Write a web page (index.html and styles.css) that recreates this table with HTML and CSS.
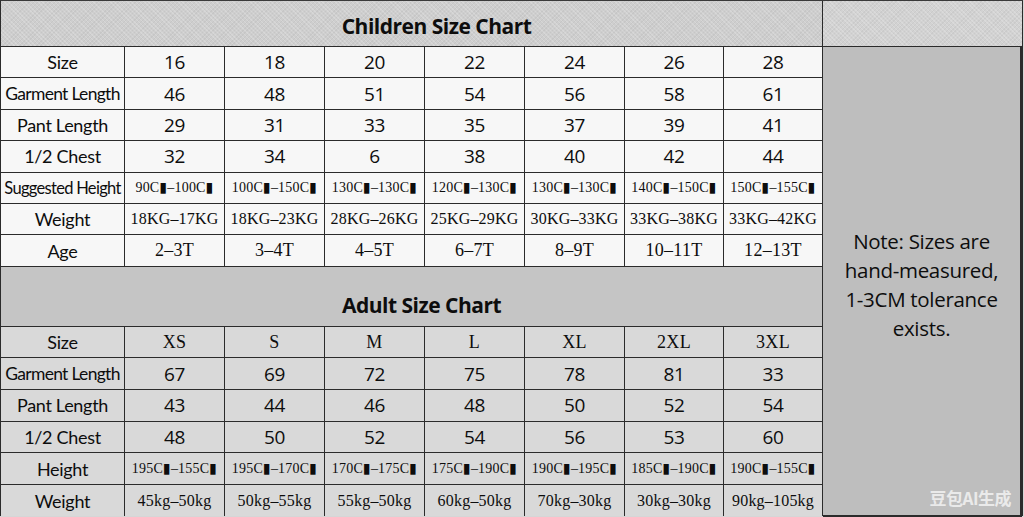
FILE: index.html
```html
<!DOCTYPE html>
<html>
<head>
<meta charset="utf-8">
<link rel="stylesheet" href="styles.css">
</head>
<body>
<div class="chart">
  <div class="title kids span8">Children Size Chart</div>
  <div class="title corner"></div>
  <div class="note">
    <p>Note: Sizes are<br>hand-measured,<br>1-3CM tolerance<br>exists.</p>
    <span class="mark">豆包AI生成</span>
  </div>

  <div class="c lab">Size</div>
  <div class="c num">16</div><div class="c num">18</div><div class="c num">20</div><div class="c num">22</div><div class="c num">24</div><div class="c num">26</div><div class="c num">28</div>

  <div class="c lab long">Garment Length</div>
  <div class="c num">46</div><div class="c num">48</div><div class="c num">51</div><div class="c num">54</div><div class="c num">56</div><div class="c num">58</div><div class="c num">61</div>

  <div class="c lab">Pant Length</div>
  <div class="c num">29</div><div class="c num">31</div><div class="c num">33</div><div class="c num">35</div><div class="c num">37</div><div class="c num">39</div><div class="c num">41</div>

  <div class="c lab">1/2 Chest</div>
  <div class="c num">32</div><div class="c num">34</div><div class="c num">6</div><div class="c num">38</div><div class="c num">40</div><div class="c num">42</div><div class="c num">44</div>

  <div class="c lab tight">Suggested Height</div>
  <div class="c sm">90C▮–100C▮</div><div class="c sm">100C▮–150C▮</div><div class="c sm">130C▮–130C▮</div><div class="c sm">120C▮–130C▮</div><div class="c sm">130C▮–130C▮</div><div class="c sm">140C▮–150C▮</div><div class="c sm">150C▮–155C▮</div>

  <div class="c lab">Weight</div>
  <div class="c ser">18KG–17KG</div><div class="c ser">18KG–23KG</div><div class="c ser">28KG–26KG</div><div class="c ser">25KG–29KG</div><div class="c ser">30KG–33KG</div><div class="c ser">33KG–38KG</div><div class="c ser">33KG–42KG</div>

  <div class="c lab">Age</div>
  <div class="c ser big">2–3T</div><div class="c ser big">3–4T</div><div class="c ser big">4–5T</div><div class="c ser big">6–7T</div><div class="c ser big">8–9T</div><div class="c ser big">10–11T</div><div class="c ser big">12–13T</div>

  <div class="title adult span8">Adult Size Chart</div>

  <div class="a lab">Size</div>
  <div class="a ser big">XS</div><div class="a ser big">S</div><div class="a ser big">M</div><div class="a ser big">L</div><div class="a ser big">XL</div><div class="a ser big">2XL</div><div class="a ser big">3XL</div>

  <div class="a lab long">Garment Length</div>
  <div class="a num">67</div><div class="a num">69</div><div class="a num">72</div><div class="a num">75</div><div class="a num">78</div><div class="a num">81</div><div class="a num">33</div>

  <div class="a lab">Pant Length</div>
  <div class="a num">43</div><div class="a num">44</div><div class="a num">46</div><div class="a num">48</div><div class="a num">50</div><div class="a num">52</div><div class="a num">54</div>

  <div class="a lab">1/2 Chest</div>
  <div class="a num">48</div><div class="a num">50</div><div class="a num">52</div><div class="a num">54</div><div class="a num">56</div><div class="a num">53</div><div class="a num">60</div>

  <div class="a lab">Height</div>
  <div class="a sm">195C▮–155C▮</div><div class="a sm">195C▮–170C▮</div><div class="a sm">170C▮–175C▮</div><div class="a sm">175C▮–190C▮</div><div class="a sm">190C▮–195C▮</div><div class="a sm">185C▮–190C▮</div><div class="a sm">190C▮–155C▮</div>

  <div class="a lab">Weight</div>
  <div class="a ser">45kg–50kg</div><div class="a ser">50kg–55kg</div><div class="a ser">55kg–50kg</div><div class="a ser">60kg–50kg</div><div class="a ser">70kg–30kg</div><div class="a ser">30kg–30kg</div><div class="a ser">90kg–105kg</div>
</div>
</body>
</html>
```

FILE: styles.css
```css
html, body {
  margin: 0;
  padding: 0;
  background: #d6d6d6;
  width: 1024px;
  height: 517px;
  overflow: hidden;
}

.chart {
  display: grid;
  grid-template-columns: 123px 99px 99px 99px 99px 99px 98px 98px 199px;
  grid-template-rows: 45px repeat(7, 30.4px) 59px repeat(6, 30.7px);
  gap: 1px;
  background: #2b2b2b;
  border-top: 1px solid #3a3a3a;
  border-left: 1px solid #2b2b2b;
  width: 1023px;
  box-sizing: border-box;
  font-family: "Open Sans", "Noto Sans", sans-serif;
  color: #0d0d0d;
}

.span8 {
  grid-column: 1 / 9;
}

.title {
  background-color: #cecece;
  background-image:
    repeating-linear-gradient(45deg, rgba(255,255,255,0.18) 0 1px, transparent 1px 3px),
    repeating-linear-gradient(-45deg, rgba(0,0,0,0.04) 0 1px, transparent 1px 3px);
  display: flex;
  align-items: center;
  justify-content: center;
  font-weight: 700;
  font-size: 21px;
  letter-spacing: -0.5px;
  padding-top: 4px;
}

.title.kids {
  padding-left: 50px;
}

.corner {
  grid-column: 9;
  grid-row: 1;
  background-color: #d2d2d2;
}

.title.adult {
  background: #c5c5c5;
  padding-top: 18px;
  padding-left: 20px;
}

.note {
  grid-column: 9;
  grid-row: 2 / 16;
  background: #bebebe;
  border-right: 2px solid #2b2b2b;
  border-bottom: 2px solid #2b2b2b;
  margin-bottom: -1px;
  display: flex;
  align-items: center;
  justify-content: center;
  position: relative;
}

.note p {
  margin: 8px 0 0 0;
  text-align: center;
  font-size: 20.5px;
  font-weight: 500;
  line-height: 29px;
  letter-spacing: -0.3px;
  color: #0d0d0d;
}

.mark {
  position: absolute;
  right: 9px;
  bottom: 5px;
  font-family: "Noto Sans CJK SC", sans-serif;
  font-weight: 700;
  font-size: 17px;
  letter-spacing: -0.5px;
  color: rgba(255,255,255,0.7);
}

.c, .a {
  display: flex;
  align-items: center;
  justify-content: center;
  white-space: nowrap;
  overflow: hidden;
}

.c {
  background: #f7f7f7;
}

.a {
  background: #d9d9d9;
}

.lab {
  font-family: Lato, "Open Sans", sans-serif;
  font-size: 18px;
  letter-spacing: -0.3px;
}

.lab.long {
  font-size: 17.5px;
  letter-spacing: -0.7px;
}

.lab.tight {
  font-size: 16.5px;
  letter-spacing: -0.7px;
}

.num {
  font-size: 19px;
  letter-spacing: -0.4px;
}

.ser {
  font-family: "Liberation Serif", "DejaVu Serif", serif;
  font-size: 16px;
  letter-spacing: 0.2px;
}

.ser.big {
  font-size: 18px;
  letter-spacing: 0.3px;
}

.sm {
  font-family: "Liberation Serif", "DejaVu Serif", serif;
  font-size: 14px;
  letter-spacing: 0.2px;
}
```
